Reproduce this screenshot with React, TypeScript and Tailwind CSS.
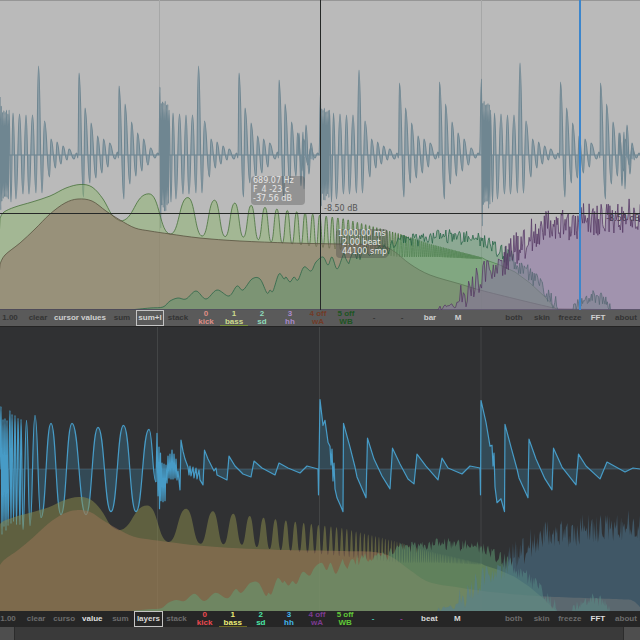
// App.tsx
import React from 'react'
import clsx from 'clsx'

type Point = [number, number]

const CELL = 'flex h-full flex-col items-center justify-center whitespace-nowrap'

// cheap repeatable noise, 0..1
const noise = (n: number) => {
  const v = Math.sin(n * 127.1 + 311.7) * 43758.5453
  return v - Math.floor(v)
}

const line = (pts: Point[]) => pts.map(([x, y]) => `${x.toFixed(1)} ${y.toFixed(1)}`).join('L')

// flat tangent at every peak and trough
const wave = (pts: Point[]) =>
  pts.slice(1).reduce((d, [x, y], i) => {
    const [px, py] = pts[i]
    const m = ((px + x) / 2).toFixed(1)
    return `${d}C${m} ${py} ${m} ${y} ${x} ${y}`
  }, `M${pts[0][0]} ${pts[0][1]}`)

// catmull-rom through the points
const smooth = (pts: Point[]) => {
  let d = `M${pts[0][0]} ${pts[0][1]}`
  for (let i = 0; i < pts.length - 1; i++) {
    const a = pts[i - 1] || pts[i]
    const b = pts[i]
    const c = pts[i + 1]
    const e = pts[i + 2] || c
    d += `C${(b[0] + (c[0] - a[0]) / 6).toFixed(1)} ${(b[1] + (c[1] - a[1]) / 6).toFixed(1)} ${(c[0] - (e[0] - b[0]) / 6).toFixed(1)} ${(c[1] - (e[1] - b[1]) / 6).toFixed(1)} ${c[0].toFixed(1)} ${c[1].toFixed(1)}`
  }
  return d
}

// interpolate a level from a short table
const level = (table: Point[], x: number) => {
  const i = Math.max(1, table.findIndex((p) => p[0] >= x))
  const [x0, y0] = table[i - 1]
  const [x1, y1] = table[i]
  return y0 + ((y1 - y0) * (x - x0)) / (x1 - x0)
}

const BAR: Point[] = [
  [9, 110], [11, 202], [13, 113], [16, 199], [19.5, 114], [23, 194], [26, 115], [29, 194], [32.5, 115], [36, 193],
  [38.5, 66], [42, 193], [44.5, 121], [49.5, 177], [51, 139], [55.5, 168], [57, 142], [61, 164], [63, 146], [67, 160],
  [69, 149], [74, 159], [76.5, 153], [78, 158], [79, 73], [83.5, 197], [85, 108], [90, 183], [91, 123], [96, 178],
  [97.5, 136], [102, 173], [103.5, 139], [108, 167], [109.5, 143], [115, 159], [117.5, 152], [118.5, 158], [119, 86],
  [124, 199], [125, 104], [130, 184], [131.5, 122], [136, 176], [137.5, 133], [142, 171], [143.5, 139], [148, 165],
  [150.5, 148], [155, 158], [157.5, 153], [159, 155],
]

const BARS = [
  { x: 0, top: 97, dense: 105, low: 208, peaks: [66, 73, 86] },
  { x: 160, top: 87, dense: 96, low: 216, peaks: [66, 73, 80] },
  { x: 320.5, top: 92, dense: 103, low: 204, peaks: [70, 83, 82] },
  { x: 481.5, top: 79, dense: 96, low: 214, peaks: [63, 82, 83] },
]

const mixWave: Point[] = BARS.flatMap(({ x, top, dense, low, peaks }, b) => {
  const attack: Point[] = [[x, top], [x + 0.8, low + (b === 1 || b === 3 ? 12 : 2)]]
  for (let i = 1; i < 7; i++) {
    attack.push([x + i * 1.3, dense + noise(i + b) * 9], [x + i * 1.3 + 0.6, low - i - noise(i * 5 + b) * 10])
  }
  const rest = BAR.map(([px, py]): Point => {
    const k = [66, 73, 86].indexOf(py)
    return [x + px, k < 0 ? py : peaks[k]]
  })
  return [...attack, ...rest]
})

const hatMarks: Point[] = [[298, 155], [299, 133], [301, 186], [303, 132], [304, 189], [306, 125], [309, 174], [311, 143], [314, 160]]
const hatMarks2: Point[] = hatMarks.map(([x, y]) => [x + 321, y])

const bassWave: Point[] = [
  [0, 468], [1, 405], [2, 534], [3, 418], [4, 526], [5, 417], [6, 530], [7, 419], [8, 525], [10, 409], [11, 523], [12, 413],
  [13.5, 521], [15, 414], [16.5, 524], [18, 417], [20, 524], [21, 418], [23, 529], [26.5, 419], [30, 525], [35, 414],
  [41, 517], [51, 422], [61, 514], [72, 422], [86, 514], [98, 426], [111, 511], [123.5, 424], [136, 511], [149, 428], [156, 481],
]

const saw: Point[] = [
  [156, 481], [157, 432], [158, 495], [159, 446], [159.5, 508], [160.5, 452], [161, 500], [162, 462], [163, 501], [164, 463],
  [165, 500], [166, 464], [167, 482], [168, 455], [169, 477], [170, 453], [171, 478], [172, 449], [173, 478], [174, 453],
  [175, 477], [176, 458], [177, 479], [178, 470], [180, 489], [181, 439], [183, 450], [185, 458], [188, 466], [189, 474],
  [190, 465], [191, 475], [193, 466], [194, 477], [196, 467], [197, 478], [199, 469], [200, 479], [203, 484], [204.5, 449],
  [208, 458], [212, 466], [214, 470], [216, 467], [217, 474], [227, 479], [229, 455], [235, 465], [243, 473], [251, 476],
  [254, 460], [262, 467], [275, 474], [279, 462], [288, 467], [300, 472], [307, 465], [318, 468], [318.5, 494], [320, 398],
  [323, 424], [325, 419], [328, 441], [330, 445], [331, 464], [332, 448], [333, 480], [334, 462], [335, 488], [337, 497],
  [341, 506], [343, 511], [343.5, 422], [350, 446], [355, 466], [357, 476], [366, 497], [367.5, 437], [374, 458],
  [382, 475], [390, 488], [392.5, 447], [400, 463], [408, 478], [414, 483], [417, 453], [426, 465], [438, 479],
  [442, 457], [448, 467], [462, 473], [470, 465], [480, 467], [480.5, 494], [481, 399], [486, 421], [490, 445],
  [492, 444], [493, 465], [494, 452], [495, 486], [497, 502], [501, 498], [504.5, 511], [505, 423], [511, 446],
  [517, 468], [519, 477], [528, 497], [529, 438], [536, 458], [545, 478], [552, 489], [553.5, 447], [562, 466],
  [576, 484], [578.5, 453], [586, 465], [600, 478], [607, 461], [625, 471], [633, 467], [640, 468],
]

const KICK: Point[] = [
  [0, 264], [5, 255], [20, 243], [35, 229], [50, 214], [65, 203], [78, 199], [92, 201], [106, 211], [120, 220],
  [135, 228], [150, 231], [170, 234], [200, 238], [240, 241], [290, 243], [340, 244], [375, 245], [392, 250],
  [410, 264], [430, 275], [460, 284], [480, 290], [520, 300], [558, 309],
]

const KICK_LOW: Point[] = [...KICK.slice(0, 20), [430, 278], [460, 284], [500, 290], [547, 294], [620, 297], [634, 299], [644, 310]]

const combTop: Point[] = [[120, 191], [213, 200], [298, 212], [345, 219], [400, 234], [430, 244], [480, 257], [500, 262]]
const combBase: Point[] = [[120, 221], [170, 234], [201, 236], [243, 237], [272, 242], [311, 246], [360, 252], [400, 257], [440, 257], [480, 259], [500, 263]]

const combAt = (k: number) => 120 + 86 * Math.log((k + 1.25) / 1.25)
const comb: Point[] = []
for (let k = 0; combAt(k) < 482; k++) {
  const t = combAt(k)
  const p = combAt(k + 0.5)
  comb.push([+t.toFixed(1), level(combBase, t)], [+p.toFixed(1), level(combTop, p)])
}

const bassRise: Point[] = [[0, 218], [4, 212], [15, 207], [32, 202], [50, 196], [66, 188], [80, 184.5], [92, 187], [103, 199], [112, 215], [120, 221]]
const bassFall: Point[] = [[486, 260], [500, 265], [515, 272], [530, 283], [545, 297], [557, 310]]
const BASS = `${smooth(bassRise)}${wave(comb).replace('M', 'L')}L${line(bassFall)}`

const sdRise: Point[] = [
  [130, 310], [150, 308], [163, 307], [170, 301], [178, 298], [186, 299], [196, 291], [206, 299], [217, 290], [229, 296],
  [237, 286], [243, 290], [252, 279], [260, 279], [267, 293], [270, 290], [273, 291], [279, 274], [284, 279], [286, 277],
  [290, 282], [294, 277], [298, 280], [304, 267], [311, 271], [316, 262], [323, 257], [328, 265], [332, 257],
  [337, 269], [342, 258],
]
const sdLevel: Point[] = [[342, 259], [365, 253], [385, 250], [400, 242], [440, 236], [470, 238], [488, 242], [505, 256], [525, 270], [540, 287], [558, 309]]
const sdNoise: Point[] = []
for (let x = 344; x < 557; x += x < 400 ? 1.6 : 0.9) {
  const size = x < 500 ? 15 : 20
  sdNoise.push([x, Math.min(310, level(sdLevel, x) + (noise(x) - 0.5) * size)])
}
const sdBump: Point[] = [[572, 310]]
for (let x = 573; x < 612; x += 0.8) {
  sdBump.push([x, Math.min(310, 297 + Math.pow((x - 593) / 18, 2) * 11 + (noise(x) - 0.5) * 13)])
}
sdBump.push([612, 310])
const SD = `${smooth(sdRise)}L${line(sdNoise)}L558 310L${line(sdBump)}`

const hhLevel: Point[] = [[439, 308], [455, 304], [470, 289], [482, 277], [495, 265], [510, 254], [525, 242], [537, 230], [560, 225], [590, 219], [620, 217], [641, 212]]
const hh: Point[] = [[438, 310]]
for (let x = 440; x < 642; x += x < 500 ? 1.3 : 0.8) {
  const size = x < 460 ? 9 : x < 500 ? 29 : 35
  hh.push([x, Math.min(310, level(hhLevel, x) + (noise(x * 3) - 0.5) * size)])
}
const HH = `M${line(hh)}`

const close = (d: string) => `${d}L644 310L-4 310Z`

function Mix() {
  const main = wave(mixWave)
  return (
    <svg viewBox="0 0 640 310" preserveAspectRatio="none" className="block h-full w-full" aria-hidden="true">
      <path d="M0 0.5H640" stroke="#969696" />
      <path d="M159.5 0V310M481.5 0V310" stroke="#a6a7a7" />
      <path d="M0 155H640" stroke="#a5acb1" strokeWidth="1" />
      <g fill="#78929f" fillOpacity="0.65" stroke="#6f8691" strokeWidth="1.1" strokeLinejoin="round">
        <path d={`${main}V155H0Z`} />
        <path d={wave(hatMarks)} />
        <path d={wave(hatMarks2)} />
      </g>
      <g strokeOpacity="0.75" strokeWidth="1">
        <path d={close(BASS)} fill="#8cb46e" fillOpacity="0.5" stroke="#426d34" />
        <path d={close(smooth(KICK))} fill="#8d6b60" fillOpacity="0.5" stroke="#554f3c" />
        <path d={close(SD)} fill="#60976e" fillOpacity="0.5" stroke="#276447" />
        <path d={close(HH)} fill="#886ca2" fillOpacity="0.5" stroke="#553864" />
      </g>
      <path d="M0 213.5H640M320.5 0V310" stroke="#252827" />
      <path d="M580 0V310" stroke="#3c86cc" strokeWidth="2" />
    </svg>
  )
}

function Layers() {
  return (
    <svg viewBox="0 325 640 286" preserveAspectRatio="none" className="block h-full w-full" aria-hidden="true">
      <path d="M157.5 325V611M319.5 325V611M481 325V611" stroke="#434546" />
      <path d="M0 468H640" stroke="#455159" />
      <g fill="#3b83a8" fillOpacity="0.3" stroke="#479bc6" strokeWidth="1.2" strokeLinejoin="round">
        <path d={`${wave(bassWave)}V468H0Z`} stroke="none" />
        <path d={`M${line(saw)}V468H156Z`} stroke="none" />
        <path d={wave(bassWave)} fill="none" />
        <path d={`M${line(saw)}`} fill="none" />
      </g>
      <g transform="translate(-2 611) scale(1.002 0.915) translate(0 -310)" fillOpacity="0.5">
        <path d={close(BASS)} fill="#8d904e" />
        <path d={close(smooth(KICK_LOW))} fill="#9c7458" />
        <path d={close(SD)} fill="#61a278" />
        <path d={close(HH)} fill="#4f7e9a" />
      </g>
    </svg>
  )
}

type Item = { text: string; top?: string; tone?: string; wide?: boolean; boxed?: boolean; underline?: string }

function Toolbar({ items, label, className }: { items: Item[]; label: string; className: string }) {
  return (
    <nav aria-label={label} className={clsx('grid-rows-1 overflow-hidden font-["Liberation_Sans",sans-serif] text-[8px] font-bold leading-[8px]', className)}>
      {items.map((item, i) => (
        <button
          key={i}
          type="button"
          className={clsx(
            CELL,
            item.wide && 'col-span-2',
            item.boxed && 'border border-[#c4c4c4]',
            item.underline && 'border-b',
            item.underline,
            item.tone,
          )}
        >
          {item.top && <span>{item.top}</span>}
          <span>{item.text}</span>
        </button>
      ))}
    </nav>
  )
}

const mixItems: Item[] = [
  { text: '1.00' },
  { text: 'clear' },
  { text: 'cursor values', tone: 'text-[#cfcfcf]', wide: true },
  { text: 'sum' },
  { text: 'sum+l', tone: 'text-[#d4d4d4]', boxed: true },
  { text: 'stack' },
  { top: '0', text: 'kick', tone: 'text-[#df8e86]' },
  { top: '1', text: 'bass', tone: 'text-[#cddb8d]', underline: 'border-[#78903f]' },
  { top: '2', text: 'sd', tone: 'text-[#8fdcbc]' },
  { top: '3', text: 'hh', tone: 'text-[#a98bcb]' },
  { top: '4 off', text: 'wA', tone: 'text-[#713b27]' },
  { top: '5 off', text: 'WB', tone: 'text-[#1d5522]' },
  { text: '-' },
  { text: '-' },
  { text: 'bar', tone: 'text-[#d0d0d0]' },
  { text: 'M', tone: 'text-[#d0d0d0]' },
  { text: '' },
  { text: 'both' },
  { text: 'skin' },
  { text: 'freeze' },
  { text: 'FFT', tone: 'text-[#d0d0d0]' },
  { text: 'about' },
]

const layerItems: Item[] = [
  { text: '1.00' },
  { text: 'clear' },
  { text: 'curso' },
  { text: 'value', tone: 'text-[#dedede]' },
  { text: 'sum' },
  { text: 'layers', tone: 'text-[#d8d8d8]', boxed: true },
  { text: 'stack' },
  { top: '0', text: 'kick', tone: 'text-[#ed4950]' },
  { top: '1', text: 'bass', tone: 'text-[#eeee77]', underline: 'border-[#6e6a25]' },
  { top: '2', text: 'sd', tone: 'text-[#4be5a8]' },
  { top: '3', text: 'hh', tone: 'text-[#43b9ee]' },
  { top: '4 off', text: 'wA', tone: 'text-[#7c3b91]' },
  { top: '5 off', text: 'WB', tone: 'text-[#60c837]' },
  { text: '-', tone: 'text-[#43c9b8]' },
  { text: '-', tone: 'text-[#8b3b91]' },
  { text: 'beat', tone: 'text-[#d8d8d8]' },
  { text: 'M', tone: 'text-[#d8d8d8]' },
  { text: '' },
  { text: 'both' },
  { text: 'skin' },
  { text: 'freeze' },
  { text: 'FFT', tone: 'text-[#dedede]' },
  { text: 'about' },
]

export default function App() {
  return (
    <main className="flex flex-col overflow-hidden bg-[#303133]">
      <section className="relative h-[310px] overflow-hidden bg-[#bababa] font-['DejaVu_Sans',sans-serif] text-[8px] leading-[9px]">
        <Mix />
        <div className="absolute left-[251px] top-[176px] w-[54px] rounded bg-[#5a5a5a]/40 pb-0.5 pl-0.5 text-[#e6e6e6]">
          <p>689.07 Hz</p>
          <p>F_4 -23 c</p>
          <p>-37.56 dB</p>
        </div>
        <div className="absolute left-[336px] top-[229px] w-[52px] whitespace-nowrap rounded bg-[#4a4a4a]/40 pb-0.5 pl-0.5 text-[#e6e6e6]">
          <p>1000.00 ms</p>
          <p className="pl-1">2.00 beat</p>
          <p className="pl-1">44100 smp</p>
        </div>
        <p className="absolute left-[324px] top-[204px] text-[#555]">-8.50 dB</p>
        <p className="absolute right-0 top-[214px] whitespace-nowrap text-[#463850]">-8.50 dB</p>
      </section>
      <Toolbar
        label="Mix"
        items={mixItems}
        className="-ml-1 grid h-4 grid-cols-[repeat(23,minmax(0,1fr))] bg-[#5a5a5a] text-[#343434]"
      />
      <section className="h-[285px] border-t border-[#242424]">
        <Layers />
      </section>
      <Toolbar
        label="Layers"
        items={layerItems}
        className="-ml-1.5 grid h-4 grid-cols-[repeat(23,minmax(0,1fr))] bg-[#262626] text-[#6c6c6c]"
      />
      <div className="flex h-[13px] bg-[#4e4e4e]">
        <button type="button" aria-label="Scroll left" className="w-3.5" />
        <div className="flex-1 border-x border-[#2c2c2c] bg-[#3a3a3a]" />
        <button type="button" aria-label="Scroll right" className="w-4" />
      </div>
    </main>
  )
}
